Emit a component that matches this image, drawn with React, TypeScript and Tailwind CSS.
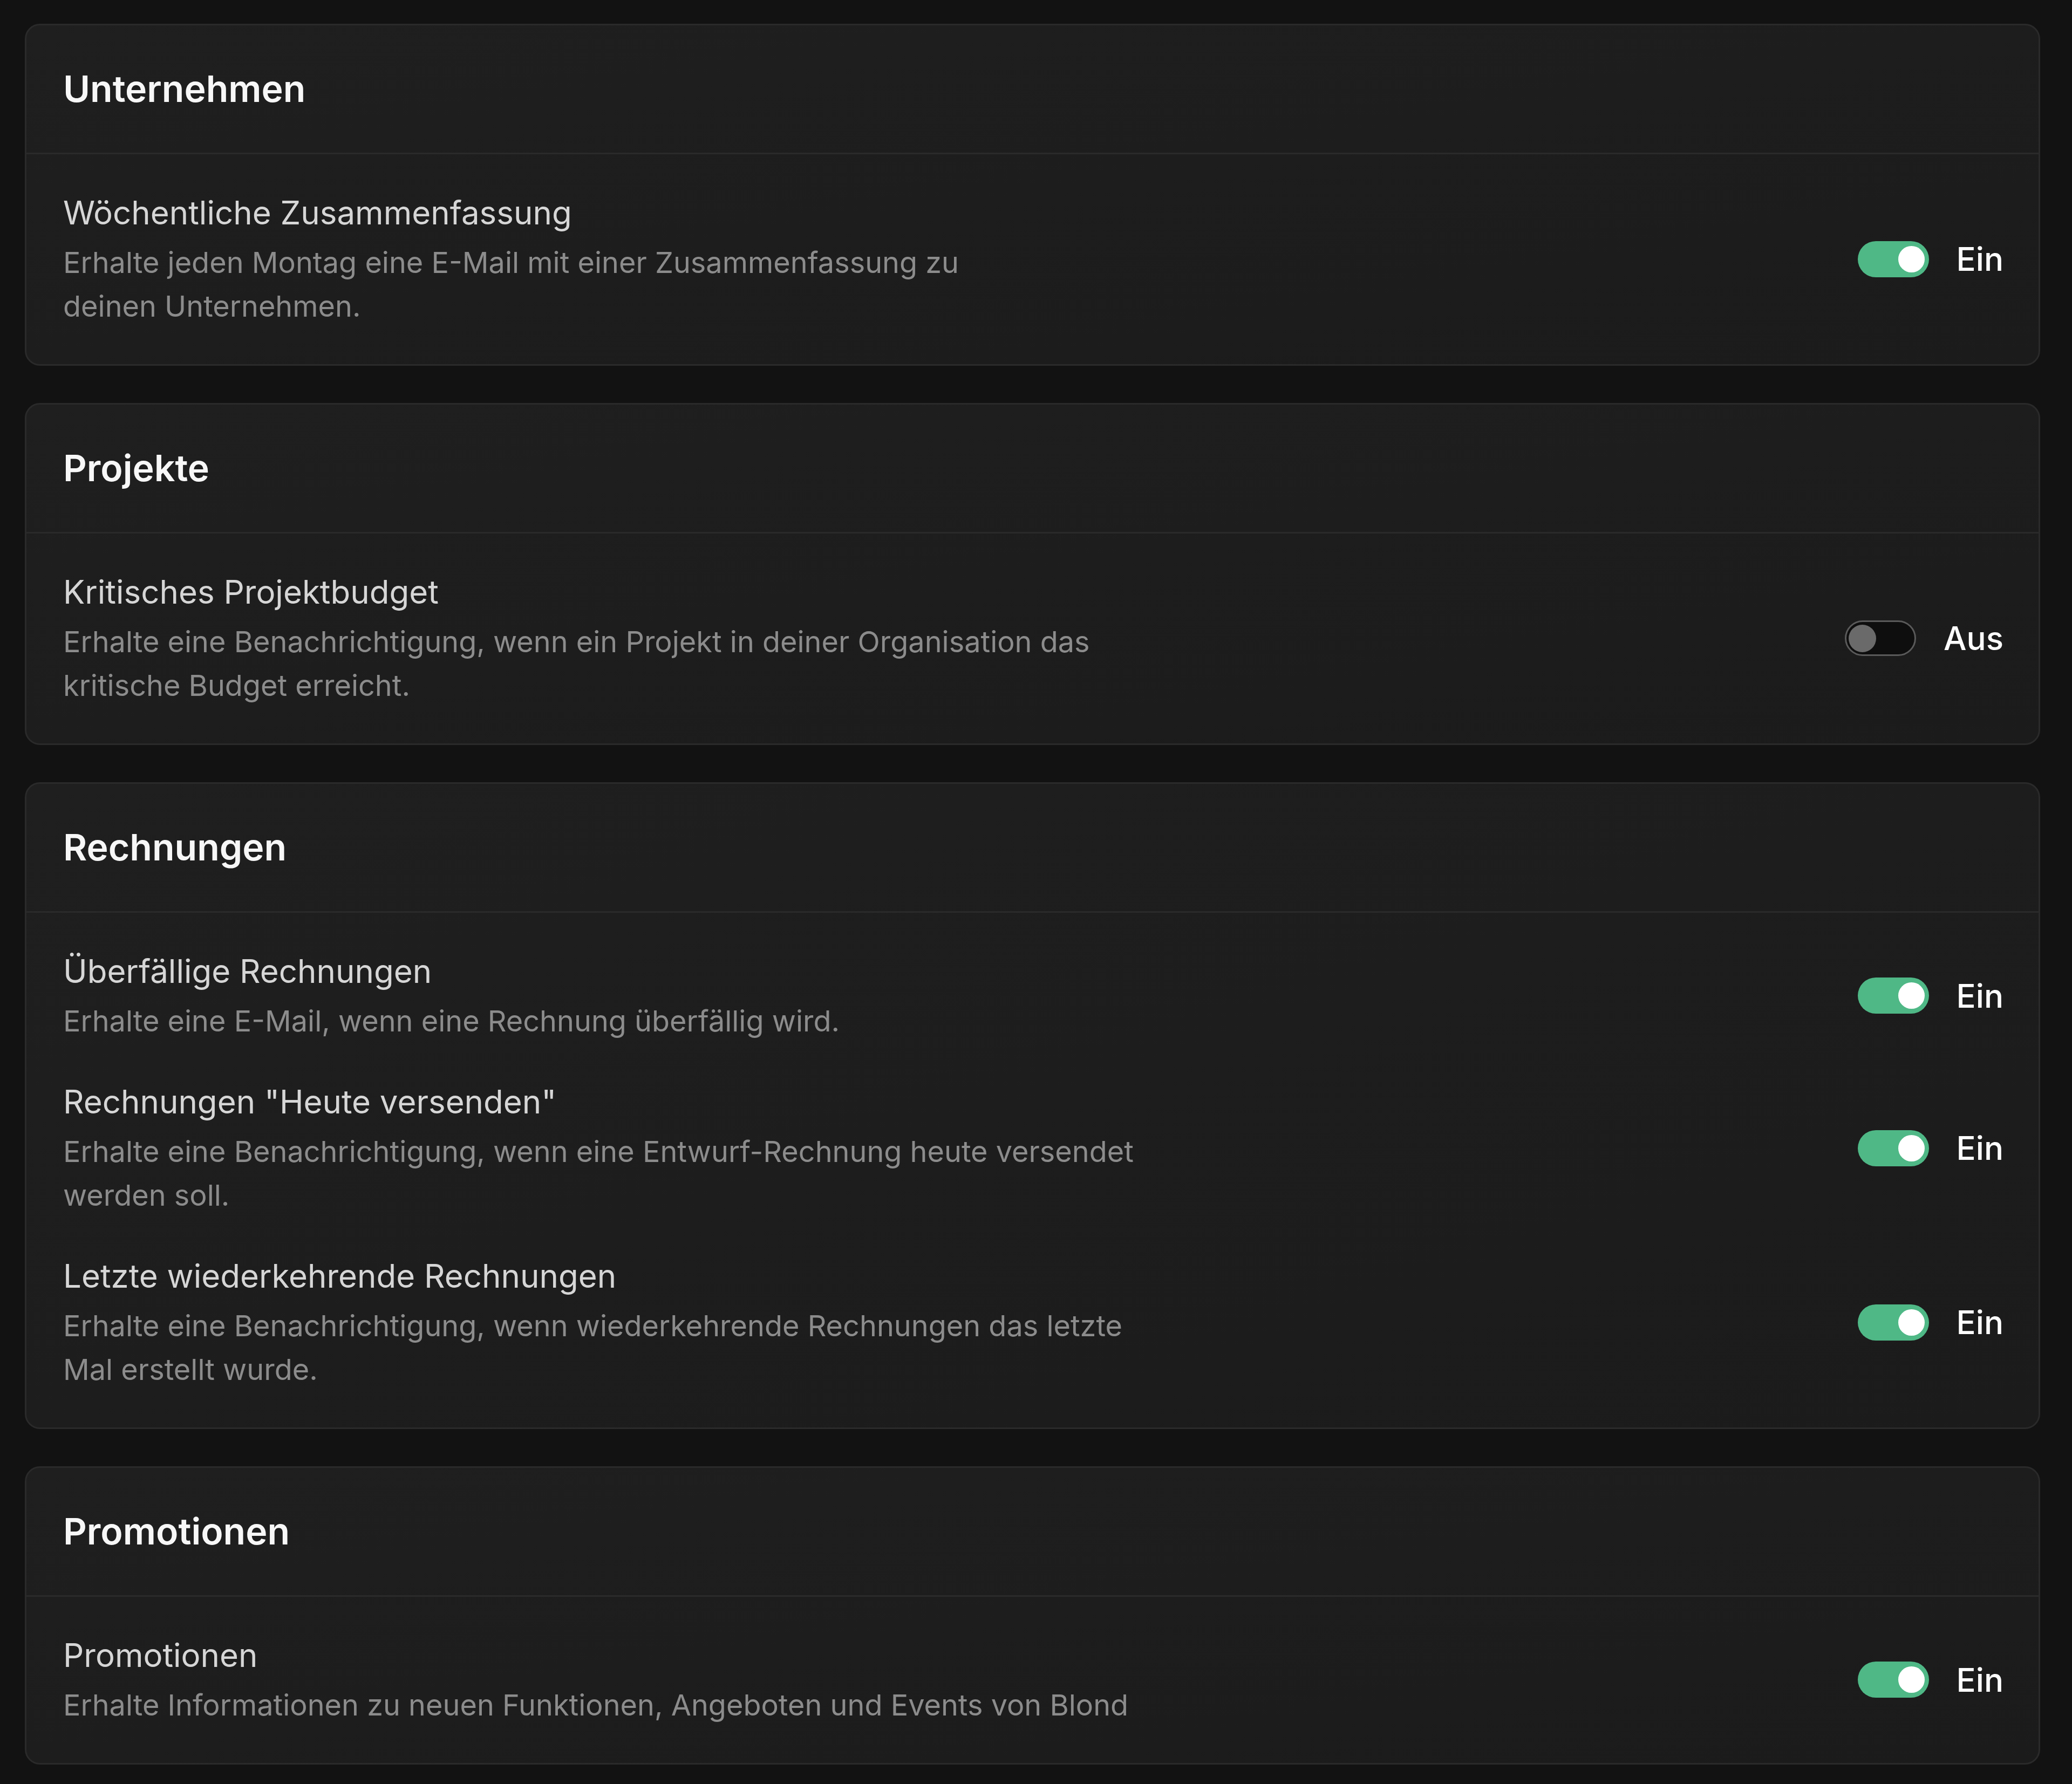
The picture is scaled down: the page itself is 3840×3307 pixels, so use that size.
import React from 'react';

type Setting = {
  title: string;
  description: string;
  enabled: boolean;
  textWidth: string;
};

type Section = {
  heading: string;
  settings: Setting[];
};

const sections: Section[] = [
  {
    heading: 'Unternehmen',
    settings: [
      {
        title: 'Wöchentliche Zusammenfassung',
        description: 'Erhalte jeden Montag eine E-Mail mit einer Zusammenfassung zu deinen Unternehmen.',
        enabled: true,
        textWidth: 'max-w-[1800px]',
      },
    ],
  },
  {
    heading: 'Projekte',
    settings: [
      {
        title: 'Kritisches Projektbudget',
        description: 'Erhalte eine Benachrichtigung, wenn ein Projekt in deiner Organisation das kritische Budget erreicht.',
        enabled: false,
        textWidth: 'max-w-[2040px]',
      },
    ],
  },
  {
    heading: 'Rechnungen',
    settings: [
      {
        title: 'Überfällige Rechnungen',
        description: 'Erhalte eine E-Mail, wenn eine Rechnung überfällig wird.',
        enabled: true,
        textWidth: 'max-w-[2040px]',
      },
      {
        title: 'Rechnungen "Heute versenden"',
        description: 'Erhalte eine Benachrichtigung, wenn eine Entwurf-Rechnung heute versendet werden soll.',
        enabled: true,
        textWidth: 'max-w-[2040px]',
      },
      {
        title: 'Letzte wiederkehrende Rechnungen',
        description: 'Erhalte eine Benachrichtigung, wenn wiederkehrende Rechnungen das letzte Mal erstellt wurde.',
        enabled: true,
        textWidth: 'max-w-[2040px]',
      },
    ],
  },
  {
    heading: 'Promotionen',
    settings: [
      {
        title: 'Promotionen',
        description: 'Erhalte Informationen zu neuen Funktionen, Angeboten und Events von Blond',
        enabled: true,
        textWidth: 'max-w-[2040px]',
      },
    ],
  },
];

const Toggle = ({ enabled }: { enabled: boolean }) => {
  if (enabled) {
    return (
      <button className="flex h-[67px] w-[132px] shrink-0 items-center justify-end rounded-full bg-[#4fb886] px-[8px]">
        <span className="size-[49px] rounded-full bg-white" />
      </button>
    );
  }
  return (
    <button className="flex h-[66px] w-[132px] shrink-0 items-center justify-start rounded-full border-[3px] border-[#5a5a5a] bg-[#0e0e0e] px-[4px]">
      <span className="size-[51px] rounded-full bg-[#6a6a6a]" />
    </button>
  );
};

const SettingRow = ({ setting }: { setting: Setting }) => (
  <div className="flex items-center justify-between gap-[80px]">
    <div className={setting.textWidth}>
      <div className="text-[60px] leading-[84px] text-[#d6d6d6]">{setting.title}</div>
      <p className="mt-[10px] text-[54px] leading-[81px] text-[#8c8c8c]">{setting.description}</p>
    </div>
    <div className="flex shrink-0 items-center gap-[51px]">
      <Toggle enabled={setting.enabled} />
      <span className="text-[60px] font-medium leading-[84px] text-white">
        {setting.enabled ? 'Ein' : 'Aus'}
      </span>
    </div>
  </div>
);

export default function App() {
  return (
    <div className="min-h-screen bg-[#121212] pb-[40px] pl-[46px] pr-[59px] pt-[44px] font-[Inter,sans-serif]">
      <div className="flex flex-col gap-[69px]">
        {sections.map((section) => (
          <section
            key={section.heading}
            className="rounded-[28px] border-[3px] border-[#2a2a2a] bg-gradient-to-br from-[#1f1f1f] to-[#1b1b1b]"
          >
            <div className="flex h-[239px] items-center border-b-[3px] border-[#2a2a2a] pb-[3px] pl-[68px] pr-[65px]">
              <h2 className="text-[68px] font-semibold text-[#f7f7f7]">{section.heading}</h2>
            </div>
            <div className="flex flex-col gap-[67px] pb-[67px] pl-[68px] pr-[65px] pt-[66px]">
              {section.settings.map((setting) => (
                <SettingRow key={setting.title} setting={setting} />
              ))}
            </div>
          </section>
        ))}
      </div>
    </div>
  );
}
